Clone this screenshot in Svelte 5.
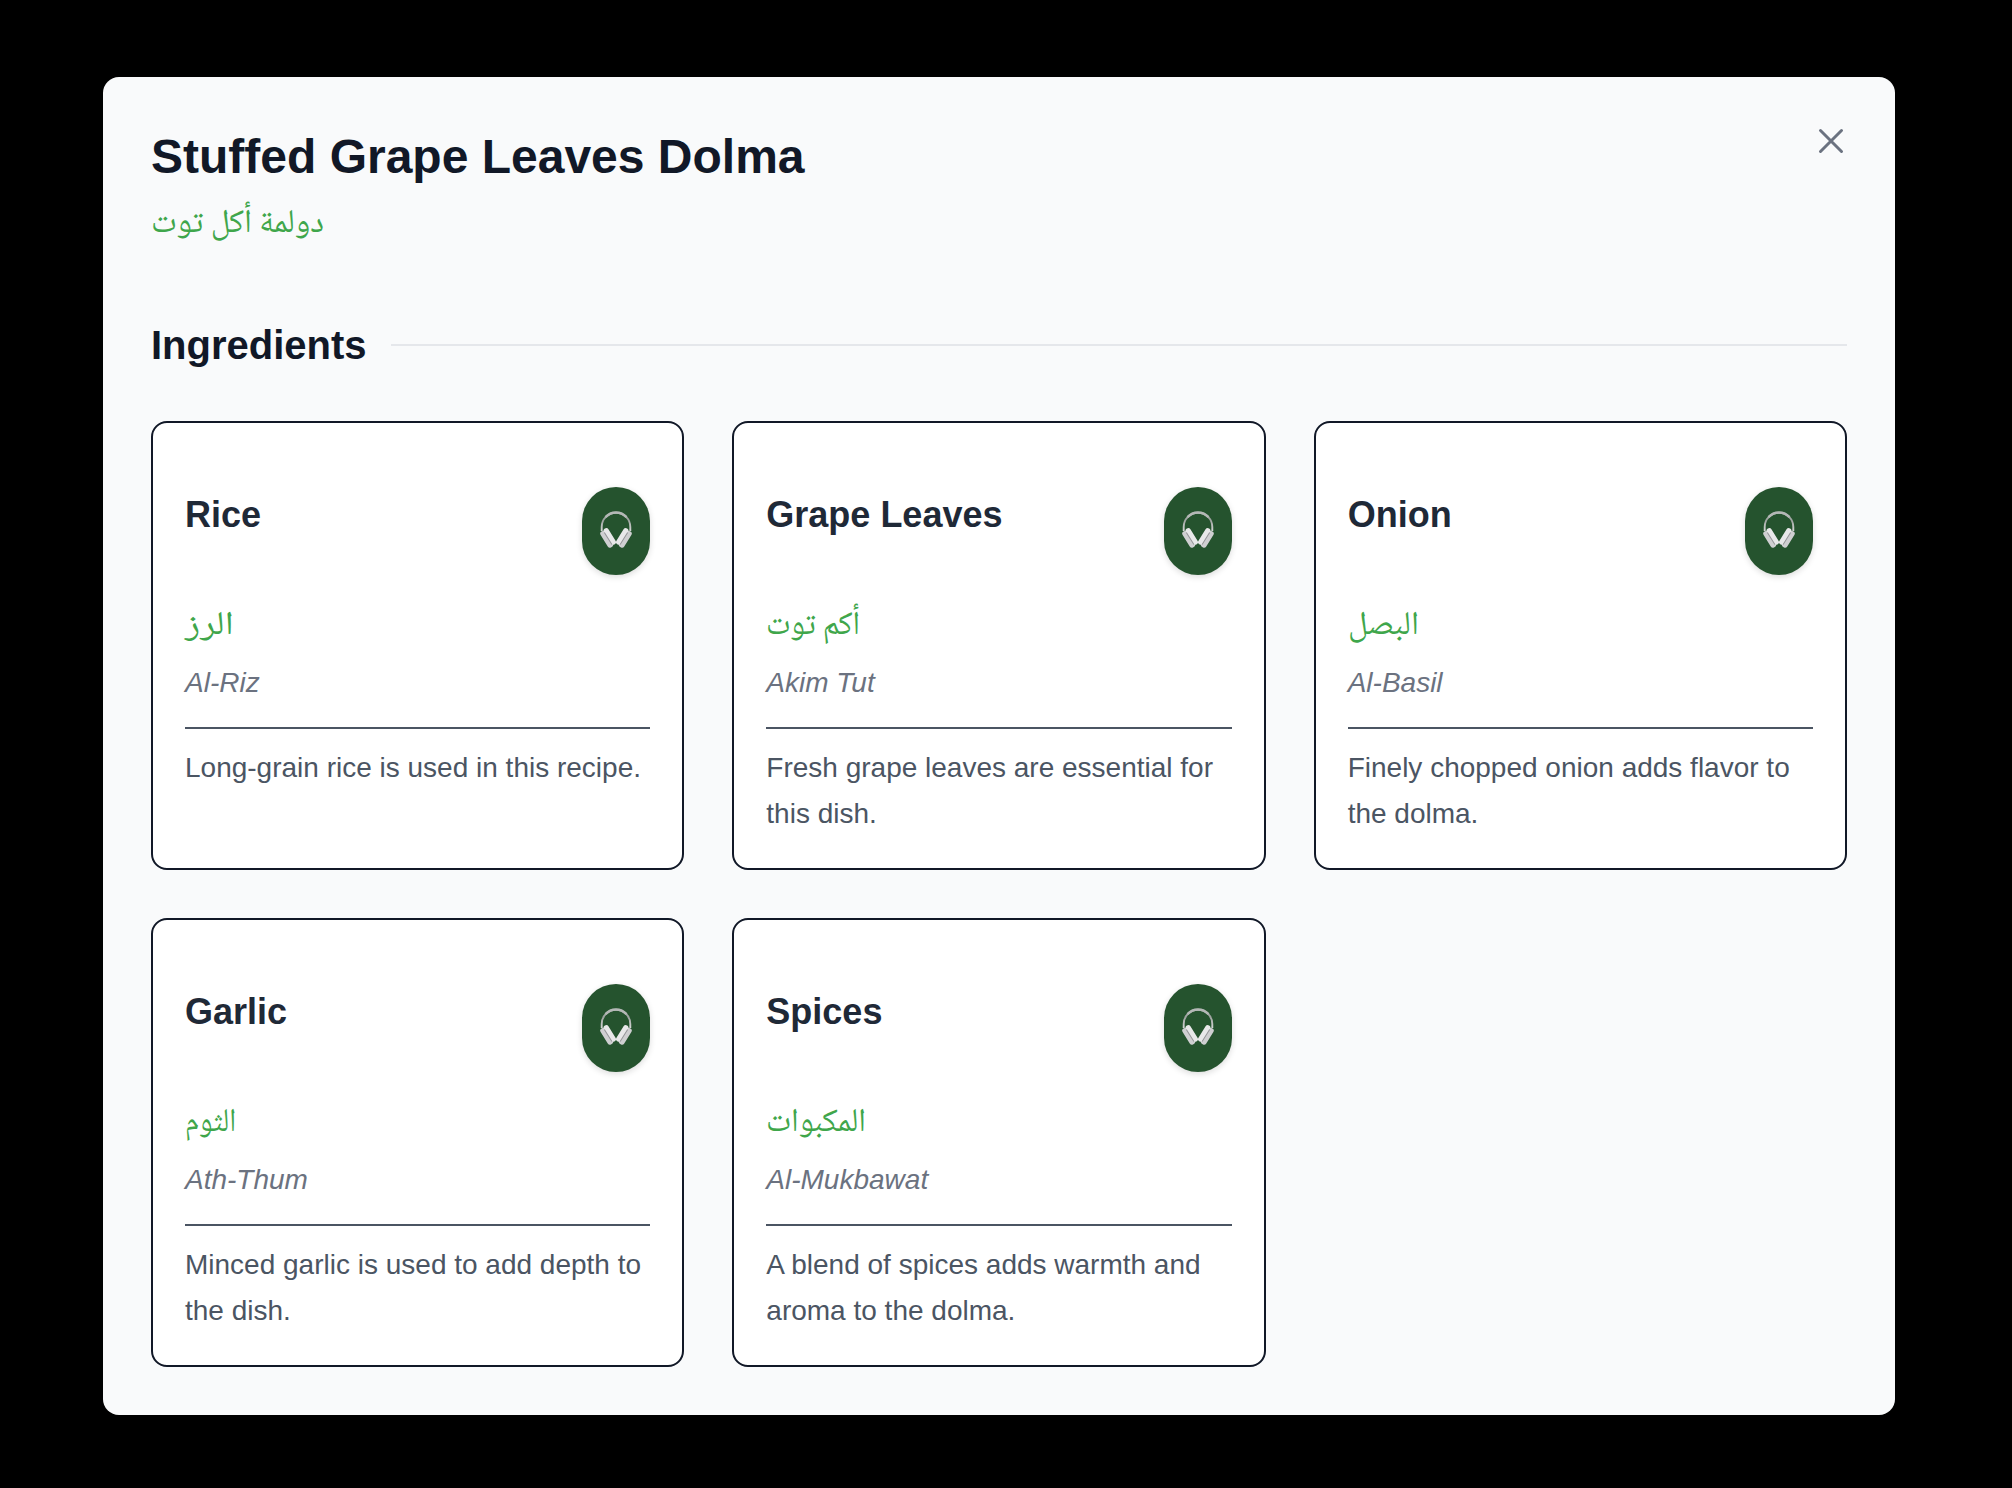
<script lang="ts">
  const ingredients = [
    { name: 'Rice', arabic: 'الرز', latin: 'Al-Riz', note: 'Long-grain rice is used in this recipe.', width: 49 },
    { name: 'Grape Leaves', arabic: 'أكم توت', latin: 'Akim Tut', note: 'Fresh grape leaves are essential for this dish.', width: 94 },
    { name: 'Onion', arabic: 'البصل', latin: 'Al-Basil', note: 'Finely chopped onion adds flavor to the dolma.', width: 71 },
    { name: 'Garlic', arabic: 'الثوم', latin: 'Ath-Thum', note: 'Minced garlic is used to add depth to the dish.', width: 51 },
    { name: 'Spices', arabic: 'المكبوات', latin: 'Al-Mukbawat', note: 'A blend of spices adds warmth and aroma to the dolma.', width: 100 },
  ];
</script>

{#snippet arabicText(text: string, width: number)}
  <svg class="arabic" height="60" {width} lang="ar">
    <text x={width} y="40" direction="rtl" textLength={width} lengthAdjust="spacingAndGlyphs">{text}</text>
  </svg>
{/snippet}

<main>
  <section class="modal">
    <header>
      <div>
        <h1>Stuffed Grape Leaves Dolma</h1>
        <div class="subtitle">{@render arabicText('دولمة أكل توت', 173)}</div>
      </div>
      <button class="close" aria-label="Close">
        <svg width="48" height="48" viewBox="0 0 48 48"><path d="M13.5 13.5 34.5 34.5M34.5 13.5 13.5 34.5" /></svg>
      </button>
    </header>
    <div class="section-title"><h2>Ingredients</h2><span></span></div>
    <div class="grid">
      {#each ingredients as item}
        <article>
          <div class="top">
            <h3>{item.name}</h3>
            <button class="listen" aria-label="Listen">
              <svg width="34" height="40" viewBox="0 0 34 40">
                <defs>
                  <linearGradient id="band" x1="0" y1="0" x2="0" y2="1">
                    <stop offset="0" stop-color="#b4b8b6" /><stop offset=".4" stop-color="#9da29f" /><stop offset="1" stop-color="#d5d7d6" />
                  </linearGradient>
                  <g id="cup" transform="translate(9 26.8) rotate(-32)">
                    <rect x="-4.8" y="-8.8" width="5.8" height="18.6" rx="2.6" fill="#cfcfd1" />
                    <rect x="-.3" y="-9.6" width="5.2" height="18.6" rx="2.6" fill="#e8e8e9" />
                    <path d="M-.3-6.4V7.8" stroke="#929296" stroke-width="1" />
                  </g>
                </defs>
                <path d="M2.7 20V16A14.3 14.3 0 0 1 31.3 16V20" fill="none" stroke="url(#band)" stroke-width="1.9" />
                <path d="M6.5 6.2A14 14 0 0 1 27.5 6.2" fill="none" stroke="#b4b8b6" stroke-width="2.5" />
                <use href="#cup" />
                <use href="#cup" transform="matrix(-1 0 0 1 34 0)" />
              </svg>
            </button>
          </div>
          <div class="word">{@render arabicText(item.arabic, item.width)}</div>
          <p class="latin">{item.latin}</p>
          <p class="note">{item.note}</p>
        </article>
      {/each}
    </div>
  </section>
</main>

<style>
  :global(body) { background: #000; }
  main { box-sizing: border-box; width: 2012px; height: 1488px; padding: 77px 117px 73px 103px; background: #000; font-family: 'Liberation Sans', Arial, sans-serif; }
  .modal { box-sizing: border-box; width: 1792px; height: 1338px; padding: 48px; border-radius: 16px; background: #f9fafb; color: #111827; }
  h1, h2, h3, p { margin: 0; }
  button { border: 0; padding: 0; background: none; }
  header { display: flex; justify-content: space-between; height: 184px; }
  h1 { font-size: 48px; line-height: 63px; white-space: nowrap; }
  .subtitle { padding-top: 4px; height: 60px; }
  .arabic { display: block; overflow: visible; fill: #3fa64b; font-size: 33px; font-family: 'Noto Naskh Arabic', 'DejaVu Sans', sans-serif; }
  .close { width: 48px; height: 48px; margin: -8px -8px 0 0; }
  .close svg { display: block; fill: none; stroke: #6b7280; stroke-width: 3; stroke-linecap: round; }
  .section-title { display: flex; align-items: center; gap: 24px; height: 72px; margin-bottom: 40px; }
  h2 { font-size: 40px; line-height: 72px; }
  .section-title span { flex: 1; height: 2px; background: #e5e7eb; }
  .grid { display: grid; grid-template-columns: repeat(3, 1fr); gap: 48px; }
  article { box-sizing: border-box; height: 449px; padding: 64px 32px 32px; border: 2px solid #111827; border-radius: 16px; background: #fff; }
  .top { display: flex; justify-content: space-between; height: 88px; }
  h3 { font-size: 36px; line-height: 56px; color: #1f2937; }
  .listen { display: grid; place-items: center; width: 68px; height: 88px; border-radius: 34px; background: #25532e; box-shadow: 0 2px 6px rgb(0 0 0 / .14); }
  .listen svg { display: block; }
  .word { box-sizing: border-box; height: 88px; padding-top: 19px; }
  .latin { height: 64px; border-bottom: 2px solid #4b5563; font-size: 28px; line-height: 40px; font-style: italic; color: #6b7280; }
  .note { padding-top: 16px; font-size: 28px; line-height: 45.5px; color: #4b5563; }
</style>
